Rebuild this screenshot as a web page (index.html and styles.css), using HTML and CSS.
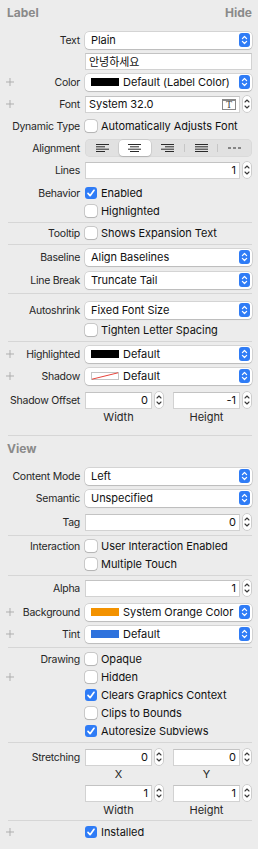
FILE: index.html
```html
<!DOCTYPE html>
<html lang="en">
<head>
  <meta charset="UTF-8" />
  <meta name="viewport" content="width=device-width, initial-scale=1.0" />
  <title>Attributes Inspector</title>
  <link rel="stylesheet" href="styles.css">
</head>
<body>
  <svg class="defs" width="0" height="0" aria-hidden="true">
    <symbol id="arr" viewBox="0 0 11 14">
      <rect width="11" height="14" rx="3" fill="#2f7cf6"/>
      <path d="M3.4 5.6 5.5 3.5 7.6 5.6M3.4 8.4 5.5 10.5 7.6 8.4" fill="none" stroke="#fff" stroke-width="1.2" stroke-linecap="round" stroke-linejoin="round"/>
    </symbol>
    <symbol id="step" viewBox="0 0 10 18">
      <rect x=".5" y=".5" width="9" height="17" rx="4.5" fill="#fff" stroke="#cdcdcd"/>
      <path d="M3 7 5 5 7 7M3 11 5 13 7 11" fill="none" stroke="#3a3a3a" stroke-width="1.1" stroke-linecap="round" stroke-linejoin="round"/>
    </symbol>
    <symbol id="tick" viewBox="0 0 12 12">
      <path d="M3 6.4 5.1 8.7 9 3.3" fill="none" stroke="#fff" stroke-width="1.7" stroke-linecap="round" stroke-linejoin="round"/>
    </symbol>
    <symbol id="plus" viewBox="0 0 9 9">
      <path d="M4.5 0v9M0 4.5h9" stroke="#a8a8a8" stroke-width="1"/>
    </symbol>
  </svg>

  <div class="inspector">
    <!-- Label -->
    <div class="group">
      <div class="head"><span>Label</span><span>Hide</span></div>
      <div class="sec first">
        <div class="row">
          <div class="lbl">Text</div>
          <div class="popup"><span class="val">Plain</span><svg class="arrows"><use href="#arr"/></svg></div>
        </div>
        <div class="row tf">
          <div class="lbl"></div>
          <div class="field">안녕하세요</div>
        </div>
        <div class="row">
          <div class="lbl"><svg class="plus"><use href="#plus"/></svg>Color</div>
          <div class="popup"><span class="swatch black"></span><span class="val">Default (Label Color)</span><svg class="arrows"><use href="#arr"/></svg></div>
        </div>
        <div class="row">
          <div class="lbl"><svg class="plus"><use href="#plus"/></svg>Font</div>
          <div class="spin">
            <div class="field">System 32.0<span class="font-btn">T</span></div>
            <svg class="stepper"><use href="#step"/></svg>
          </div>
        </div>
        <div class="row">
          <div class="lbl">Dynamic Type</div>
          <label class="opt"><span class="box"></span>Automatically Adjusts Font</label>
        </div>
        <div class="row">
          <div class="lbl">Alignment</div>
          <div class="seg">
            <span><svg class="al" viewBox="0 0 13 8"><path d="M0 .5h13M0 2.8h9M0 5.2h13M0 7.5h9"/></svg></span>
            <span class="sel"><svg class="al" viewBox="0 0 13 8"><path d="M0 .5h13M2 2.8h9M0 5.2h13M2 7.5h9"/></svg></span>
            <span><svg class="al" viewBox="0 0 13 8"><path d="M0 .5h13M4 2.8h9M0 5.2h13M4 7.5h9"/></svg></span>
            <i class="div"></i>
            <span><svg class="al" viewBox="0 0 13 8"><path d="M0 .5h13M0 2.8h13M0 5.2h13M0 7.5h13"/></svg></span>
            <i class="div"></i>
            <span><svg class="al" viewBox="0 0 13 8"><path d="M0 4h3M5 4h3M10 4h3"/></svg></span>
          </div>
        </div>
        <div class="row">
          <div class="lbl">Lines</div>
          <div class="spin">
            <div class="field num">1</div>
            <svg class="stepper"><use href="#step"/></svg>
          </div>
        </div>
        <div class="row chk gap3">
          <div class="lbl">Behavior</div>
          <label class="opt"><span class="box on"><svg><use href="#tick"/></svg></span>Enabled</label>
        </div>
        <div class="row chk">
          <div class="lbl"></div>
          <label class="opt"><span class="box"></span>Highlighted</label>
        </div>
      </div>
      <div class="sep"></div>
      <div class="sec">
        <div class="row chk">
          <div class="lbl">Tooltip</div>
          <label class="opt"><span class="box"></span>Shows Expansion Text</label>
        </div>
      </div>
      <div class="sep"></div>
      <div class="sec">
        <div class="row">
          <div class="lbl">Baseline</div>
          <div class="popup"><span class="val">Align Baselines</span><svg class="arrows"><use href="#arr"/></svg></div>
        </div>
        <div class="row gap1">
          <div class="lbl">Line Break</div>
          <div class="popup"><span class="val">Truncate Tail</span><svg class="arrows"><use href="#arr"/></svg></div>
        </div>
      </div>
      <div class="sep"></div>
      <div class="sec">
        <div class="row gap4">
          <div class="lbl">Autoshrink</div>
          <div class="popup"><span class="val">Fixed Font Size</span><svg class="arrows"><use href="#arr"/></svg></div>
        </div>
        <div class="row chk">
          <div class="lbl"></div>
          <label class="opt"><span class="box"></span>Tighten Letter Spacing</label>
        </div>
      </div>
      <div class="sep"></div>
      <div class="sec last">
        <div class="row">
          <div class="lbl"><svg class="plus"><use href="#plus"/></svg>Highlighted</div>
          <div class="popup"><span class="swatch black"></span><span class="val">Default</span><svg class="arrows"><use href="#arr"/></svg></div>
        </div>
        <div class="row">
          <div class="lbl"><svg class="plus"><use href="#plus"/></svg>Shadow</div>
          <div class="popup"><svg class="swatch shadow" viewBox="0 0 28 8"><rect x=".5" y=".5" width="27" height="7" fill="#fff" stroke="#c4c4c4"/><path d="M1 7.2 27 .8" stroke="#e8453c" stroke-width="1"/></svg><span class="val">Default</span><svg class="arrows"><use href="#arr"/></svg></div>
        </div>
        <div class="row pair">
          <div class="lbl">Shadow Offset</div>
          <div class="cols">
            <div class="spin"><div class="field num">0</div><svg class="stepper"><use href="#step"/></svg></div>
            <div class="spin"><div class="field num">-1</div><svg class="stepper"><use href="#step"/></svg></div>
          </div>
        </div>
        <div class="row sub">
          <div class="lbl"></div>
          <div class="cols"><span>Width</span><span>Height</span></div>
        </div>
      </div>
    </div>

    <div class="sep"></div>

    <!-- View -->
    <div class="group">
      <div class="head"><span>View</span></div>
      <div class="sec first">
        <div class="row">
          <div class="lbl">Content Mode</div>
          <div class="popup"><span class="val">Left</span><svg class="arrows"><use href="#arr"/></svg></div>
        </div>
        <div class="row">
          <div class="lbl">Semantic</div>
          <div class="popup"><span class="val">Unspecified</span><svg class="arrows"><use href="#arr"/></svg></div>
        </div>
        <div class="row gap2">
          <div class="lbl">Tag</div>
          <div class="spin"><div class="field num">0</div><svg class="stepper"><use href="#step"/></svg></div>
        </div>
      </div>
      <div class="sep"></div>
      <div class="sec">
        <div class="row chk">
          <div class="lbl">Interaction</div>
          <label class="opt"><span class="box"></span>User Interaction Enabled</label>
        </div>
        <div class="row chk">
          <div class="lbl"></div>
          <label class="opt"><span class="box"></span>Multiple Touch</label>
        </div>
      </div>
      <div class="sep"></div>
      <div class="sec">
        <div class="row">
          <div class="lbl">Alpha</div>
          <div class="spin"><div class="field num">1</div><svg class="stepper"><use href="#step"/></svg></div>
        </div>
        <div class="row gap2">
          <div class="lbl"><svg class="plus"><use href="#plus"/></svg>Background</div>
          <div class="popup"><span class="swatch orange"></span><span class="val">System Orange Color</span><svg class="arrows"><use href="#arr"/></svg></div>
        </div>
        <div class="row">
          <div class="lbl"><svg class="plus"><use href="#plus"/></svg>Tint</div>
          <div class="popup"><span class="swatch blue"></span><span class="val">Default</span><svg class="arrows"><use href="#arr"/></svg></div>
        </div>
      </div>
      <div class="sep"></div>
      <div class="sec roomy">
        <div class="row chk">
          <div class="lbl">Drawing</div>
          <label class="opt"><span class="box"></span>Opaque</label>
        </div>
        <div class="row chk">
          <div class="lbl"><svg class="plus"><use href="#plus"/></svg></div>
          <label class="opt"><span class="box"></span>Hidden</label>
        </div>
        <div class="row chk">
          <div class="lbl"></div>
          <label class="opt"><span class="box on"><svg><use href="#tick"/></svg></span>Clears Graphics Context</label>
        </div>
        <div class="row chk">
          <div class="lbl"></div>
          <label class="opt"><span class="box"></span>Clips to Bounds</label>
        </div>
        <div class="row chk">
          <div class="lbl"></div>
          <label class="opt"><span class="box on"><svg><use href="#tick"/></svg></span>Autoresize Subviews</label>
        </div>
      </div>
      <div class="sep"></div>
      <div class="sec stretch">
        <div class="row pair">
          <div class="lbl">Stretching</div>
          <div class="cols">
            <div class="spin"><div class="field num">0</div><svg class="stepper"><use href="#step"/></svg></div>
            <div class="spin"><div class="field num">0</div><svg class="stepper"><use href="#step"/></svg></div>
          </div>
        </div>
        <div class="row sub">
          <div class="lbl"></div>
          <div class="cols"><span>X</span><span>Y</span></div>
        </div>
        <div class="row pair gap4">
          <div class="lbl"></div>
          <div class="cols">
            <div class="spin"><div class="field num">1</div><svg class="stepper"><use href="#step"/></svg></div>
            <div class="spin"><div class="field num">1</div><svg class="stepper"><use href="#step"/></svg></div>
          </div>
        </div>
        <div class="row sub">
          <div class="lbl"></div>
          <div class="cols"><span>Width</span><span>Height</span></div>
        </div>
      </div>
      <div class="sep"></div>
      <div class="sec roomy">
        <div class="row chk">
          <div class="lbl"><svg class="plus"><use href="#plus"/></svg></div>
          <label class="opt"><span class="box on"><svg><use href="#tick"/></svg></span>Installed</label>
        </div>
      </div>
    </div>
  </div>
</body>
</html>
```

FILE: styles.css
```css
:root {
  --bg: #ececec;
  --line: #d6d6d6;
  --text: #262626;
  --muted: #8a8a8a;
  --blue: #2f7cf6;
}
* {
  margin: 0;
  padding: 0;
  box-sizing: border-box;
}
body {
  font-family: Inter, "Noto Sans CJK KR", sans-serif;
  font-size: 11px;
  letter-spacing: -0.05px;
  color: var(--text);
  background-color: var(--bg);
  min-height: 100vh;
  width: 258px;
}
.defs {
  position: absolute;
}
.head {
  display: flex;
  justify-content: space-between;
  align-items: center;
  height: 24px;
  padding: 0 6px 0 7px;
  font-size: 12px;
  font-weight: 700;
  letter-spacing: 0;
  color: var(--muted);
}
.sep {
  height: 1px;
  margin: 0 6px 0 8px;
  background-color: var(--line);
}
/* Sections */
.sec {
  padding: 1px 0 2px;
}
.sec.first {
  padding-top: 5px;
}
.sec.roomy {
  padding-top: 2px;
}
.sec.last {
  padding-bottom: 13px;
}
.sec.stretch {
  padding-bottom: 5px;
}
/* Rows */
.row {
  display: grid;
  grid-template-columns: 80px 1fr;
  column-gap: 5px;
  align-items: center;
  height: 22px;
  padding-right: 6px;
}
.row.tf { height: 20px; }
.row.chk { height: 18px; }
.row.pair { height: 20px; margin-top: 3px; }
.row.sub { height: 12px; }
.row.gap1 { margin-top: 1px; }
.row.gap2 { margin-top: 2px; }
.row.gap3 { margin-top: 3px; }
.row.gap4 { margin-top: 4px; }
.lbl {
  display: flex;
  align-items: center;
  justify-content: flex-end;
  white-space: nowrap;
  font-size: 10.5px;
  letter-spacing: -0.25px;
}
.plus {
  width: 8px;
  height: 8px;
  margin-left: 6px;
  margin-right: auto;
}
/* Pop-up buttons */
.popup {
  display: flex;
  align-items: center;
  height: 17px;
  padding: 0 2px 0 6px;
  gap: 4px;
  color: #111;
  background-color: #fff;
  border-radius: 4px;
  box-shadow: 0 0 0 0.5px rgba(0, 0, 0, 0.2), 0 1px 1px rgba(0, 0, 0, 0.12);
}
.popup .val {
  flex-grow: 1;
  white-space: nowrap;
}
.arrows {
  width: 11px;
  height: 14px;
  flex-shrink: 0;
}
.swatch {
  width: 28px;
  height: 8px;
  flex-shrink: 0;
}
.swatch.black { background-color: #000; }
.swatch.orange { background-color: #f39200; }
.swatch.blue { background-color: #2e72dd; }
/* Text fields */
.field {
  display: flex;
  align-items: center;
  height: 17px;
  padding: 0 3px;
  color: #111;
  background-color: #fff;
  border: 1px solid #d2d2d2;
  border-top-color: #c3c3c3;
}
.field.num {
  justify-content: flex-end;
}
.font-btn {
  margin-left: auto;
  width: 14px;
  height: 11px;
  line-height: 8px;
  text-align: center;
  font-family: "Liberation Serif", serif;
  font-size: 10px;
  color: #444;
  border: 1px solid #888;
  border-top-width: 2px;
}
.spin {
  display: flex;
  align-items: center;
  gap: 2px;
}
.spin .field {
  flex-grow: 1;
  min-width: 0;
}
.stepper {
  width: 10px;
  height: 18px;
  flex-shrink: 0;
}
.cols {
  display: grid;
  grid-template-columns: 1fr 1fr;
  column-gap: 9px;
}
.row.sub .cols span {
  padding-right: 12px;
  text-align: center;
}
/* Checkboxes */
.opt {
  display: flex;
  align-items: center;
  gap: 4px;
  white-space: nowrap;
  color: #111;
}
.box {
  display: flex;
  width: 12px;
  height: 12px;
  background-color: #fff;
  border-radius: 3px;
  box-shadow: 0 0 0 0.5px rgba(0, 0, 0, 0.28), 0 0.5px 1px rgba(0, 0, 0, 0.12);
}
.box.on {
  background-color: var(--blue);
  box-shadow: none;
}
.box svg {
  width: 12px;
  height: 12px;
}
/* Alignment segmented control */
.seg {
  display: flex;
  align-items: center;
  height: 18px;
  padding: 1px;
  background-color: #e1e1e1;
  border-radius: 5px;
  box-shadow: inset 0 0 0 0.5px rgba(0, 0, 0, 0.06);
}
.seg span {
  flex: 1;
  display: flex;
  justify-content: center;
  align-items: center;
  height: 100%;
}
.seg .sel {
  background-color: #fff;
  border-radius: 4px;
  box-shadow: 0 0 0 0.5px rgba(0, 0, 0, 0.12), 0 1px 1.5px rgba(0, 0, 0, 0.15);
}
.seg .div {
  width: 1px;
  height: 8px;
  background-color: #c6c6c6;
}
.al {
  width: 13px;
  height: 8px;
  fill: none;
  stroke: #2a2a2a;
  stroke-width: 1;
}
```
